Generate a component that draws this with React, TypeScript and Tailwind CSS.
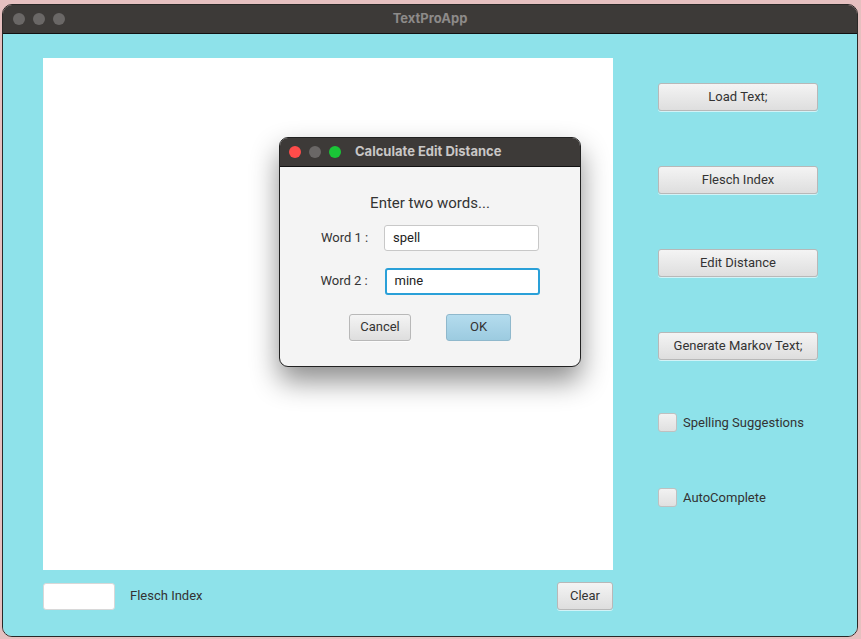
const font = "font-['Roboto','Liberation_Sans',sans-serif]";
const titleFont = "font-['Inter','Liberation_Sans',sans-serif]";

function FxButton({ label, className = "" }: { label: string; className?: string }) {
  return (
    <button
      className={`flex items-center justify-center rounded-[3px] border border-[#b8b8b8] bg-gradient-to-b from-[#f4f4f4] to-[#dedede] text-[13px] text-[#333] shadow-[0_1px_0_rgba(255,255,255,0.6)] ${className}`}
    >
      {label}
    </button>
  );
}

function CheckRow({ label, className = "" }: { label: string; className?: string }) {
  return (
    <div className={`flex items-center gap-[6px] ${className}`}>
      <div className="h-[19px] w-[19px] rounded-[3px] border border-[#c0c0c0] bg-gradient-to-b from-[#f2f2f2] to-[#e0e0e0]" />
      <span className="text-[13px] text-[#333]">{label}</span>
    </div>
  );
}

function Lights({ colors }: { colors: string[] }) {
  return (
    <div className="flex gap-[8px]">
      {colors.map((c, i) => (
        <div key={i} className={`h-[12px] w-[12px] rounded-full ${c}`} />
      ))}
    </div>
  );
}

export default function App() {
  return (
    <div className={`h-[639px] w-[861px] bg-[#e6c0c0] pb-[2px] pl-[2px] pr-[3px] pt-[4px] ${font}`}>
      <div className="flex h-full w-full flex-col overflow-hidden rounded-[10px] border border-[#2a2827]">
        {/* title bar */}
        <div className="relative flex h-[29px] shrink-0 items-center border-b border-[#111] bg-[#3d3a38] px-[10px]">
          <Lights colors={["bg-[#6a6766]", "bg-[#6a6766]", "bg-[#6a6766]"]} />
          <div className={`absolute inset-0 flex items-center justify-center text-[13px] font-bold text-[#8d8a89] ${titleFont}`}>
            TextProApp
          </div>
        </div>

        {/* content */}
        <div className="relative flex flex-1 bg-[#8ee2ea] pl-[40px] pt-[24px]">
          <div className="flex w-[570px] flex-col">
            <div className="h-[512px] w-full bg-white" />
            <div className="mt-[12px] flex items-center">
              <div className="h-[27px] w-[72px] rounded-[3px] border border-[#d8d8d8] bg-white" />
              <span className="ml-[15px] text-[13px] text-[#333]">Flesch Index</span>
              <FxButton label="Clear" className="ml-auto h-[28px] w-[56px]" />
            </div>
          </div>

          <div className="ml-[45px] flex w-[160px] flex-col pt-[25px]">
            <FxButton label="Load Text;" className="h-[28px] w-[160px]" />
            <FxButton label="Flesch Index" className="mt-[55px] h-[28px] w-[160px]" />
            <FxButton label="Edit Distance" className="mt-[55px] h-[28px] w-[160px]" />
            <FxButton label="Generate Markov Text;" className="mt-[55px] h-[28px] w-[160px]" />
            <CheckRow label="Spelling Suggestions" className="mt-[53px]" />
            <CheckRow label="AutoComplete" className="mt-[55px]" />
          </div>

          {/* dialog window */}
          <div className="absolute left-[276px] top-[103px] flex h-[230px] w-[302px] flex-col overflow-hidden rounded-[9px] border border-[#222] bg-[#f4f4f4] shadow-[0_14px_28px_rgba(0,0,0,0.45)]">
            <div className="flex h-[29px] shrink-0 items-center gap-[14px] border-b border-[#111] bg-[#3d3a38] pl-[9px]">
              <Lights colors={["bg-[#fe4c4a]", "bg-[#6a6766]", "bg-[#1ac537]"]} />
              <span className={`text-[13px] font-bold text-[#c9c7c6] ${titleFont}`}>Calculate Edit Distance</span>
            </div>
            <div className="flex flex-col items-center pt-[25px]">
              <div className="text-[15px] text-[#333]">Enter two words...</div>
              <div className="mt-[10px] flex items-center">
                <span className="w-[63px] text-[13px] text-[#333]">Word 1 :</span>
                <div className="flex h-[26px] w-[155px] items-center rounded-[3px] border border-[#c8c8c8] bg-white px-[8px] text-[13px] text-[#222]">
                  spell
                </div>
              </div>
              <div className="mt-[17px] flex items-center">
                <span className="w-[64px] text-[13px] text-[#333]">Word 2 :</span>
                <div className="flex h-[27px] w-[155px] items-center rounded-[3px] border-[2px] border-[#2aa0d8] bg-white px-[8px] text-[13px] text-[#222]">
                  mine
                </div>
              </div>
              <div className="mt-[19px] flex items-center gap-[35px]">
                <FxButton label="Cancel" className="h-[27px] w-[62px]" />
                <button className="flex h-[27px] w-[65px] items-center justify-center rounded-[3px] border border-[#8fb8cc] bg-gradient-to-b from-[#b4dcee] to-[#9ccbe0] text-[13px] text-[#333]">
                  OK
                </button>
              </div>
            </div>
          </div>
        </div>
      </div>
    </div>
  );
}
